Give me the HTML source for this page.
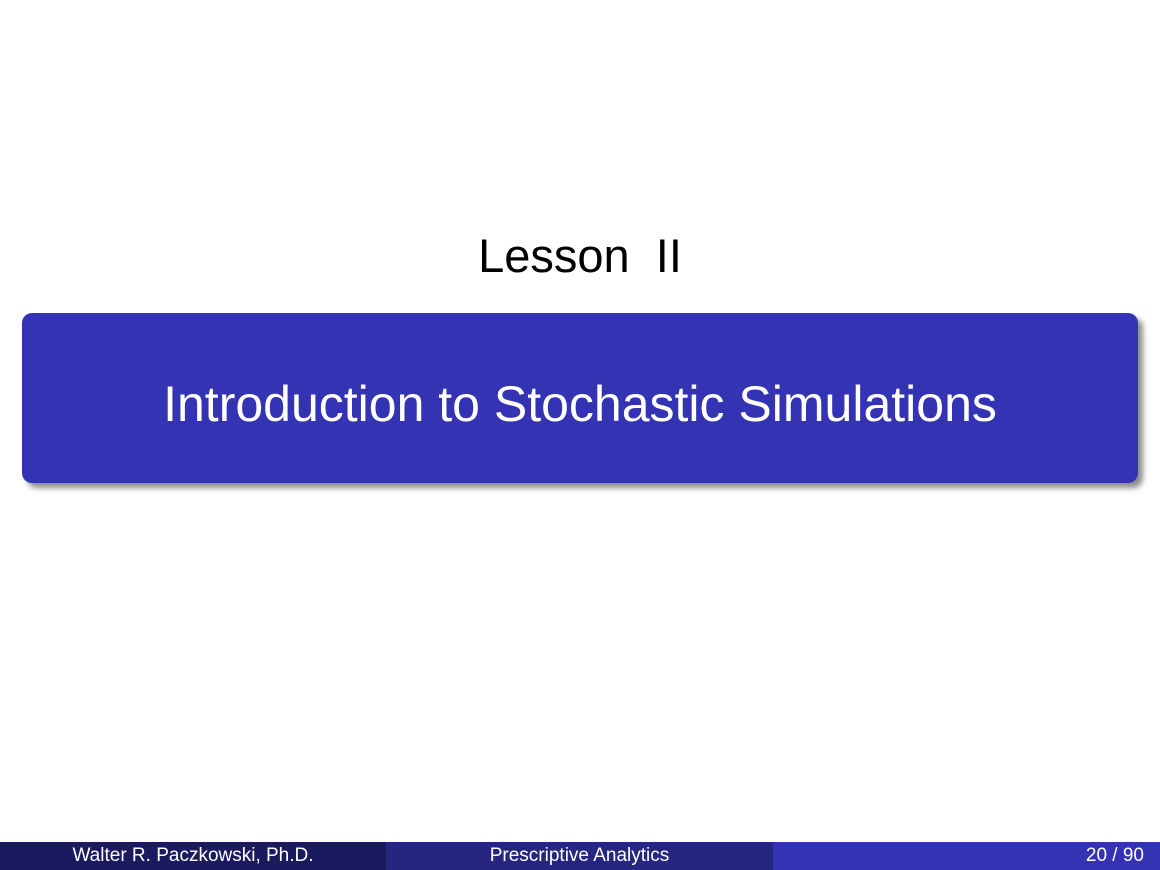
<!DOCTYPE html>
<html><head><style>
body{margin:0;width:1160px;height:870px;position:relative;background:#fff;font-family:"Liberation Sans",sans-serif;overflow:hidden}
.t{position:absolute;left:0;width:1160px;text-align:center;top:228px;font-size:47px;color:#000;line-height:56px}
.box{position:absolute;left:22px;top:313px;width:1116px;height:170px;background:#3333b3;border-radius:10px;box-shadow:5px 5px 6px rgba(0,0,0,0.45)}
.bt{position:absolute;left:0;width:1160px;text-align:center;top:374px;font-size:50px;color:#fff;line-height:60px}
.f{position:absolute;top:842px;height:28px;color:#fff;font-size:19px;line-height:28px}
</style></head><body>
<div class="t">Lesson&nbsp;&nbsp;II</div>
<div class="box"></div>
<div class="bt">Introduction to Stochastic Simulations</div>
<div class="f" style="left:0;width:386px;background:#1a1a5e;text-align:center">Walter R. Paczkowski, Ph.D.</div>
<div class="f" style="left:386px;width:387px;background:#262680;text-align:center">Prescriptive Analytics</div>
<div class="f" style="left:773px;width:387px;background:#3333b3;text-align:right"><span style="padding-right:16px">20 / 90</span></div>
</body></html>
